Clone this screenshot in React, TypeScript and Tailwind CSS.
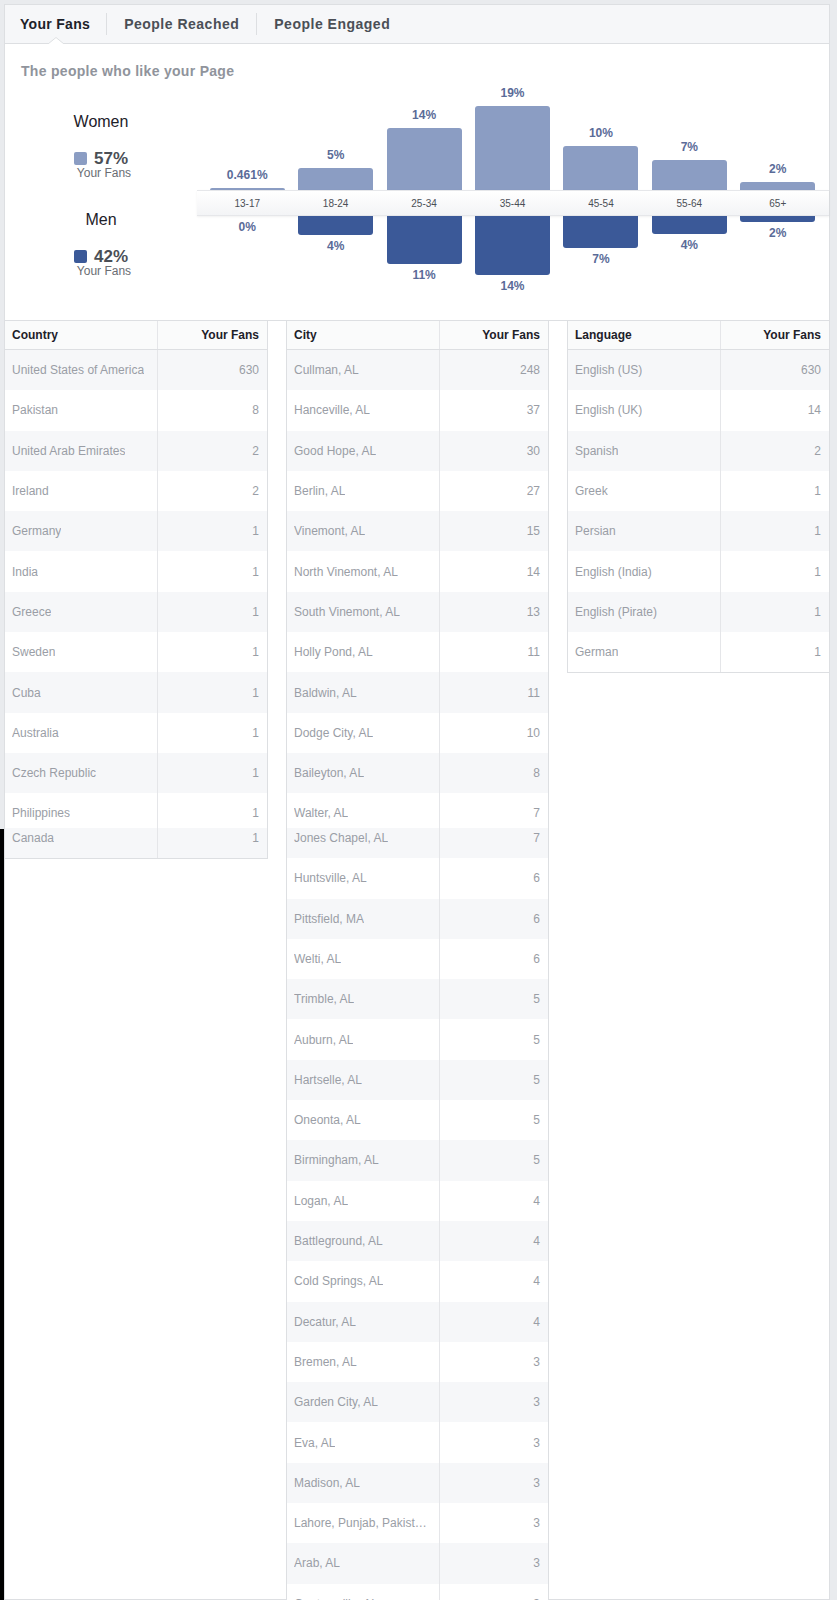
import React from 'react';

type Age = { age: string; w: string; wh: number; m: string; mh: number };

const ages: Age[] = [
  { age: '13-17', w: '0.461%', wh: 2, m: '0%', mh: 0 },
  { age: '18-24', w: '5%', wh: 22, m: '4%', mh: 19 },
  { age: '25-34', w: '14%', wh: 62, m: '11%', mh: 48 },
  { age: '35-44', w: '19%', wh: 84, m: '14%', mh: 59 },
  { age: '45-54', w: '10%', wh: 44, m: '7%', mh: 32 },
  { age: '55-64', w: '7%', wh: 30, m: '4%', mh: 18 },
  { age: '65+', w: '2%', wh: 8, m: '2%', mh: 6 },
];

const countries: [string, number][] = [
  ['United States of America', 630],
  ['Pakistan', 8],
  ['United Arab Emirates', 2],
  ['Ireland', 2],
  ['Germany', 1],
  ['India', 1],
  ['Greece', 1],
  ['Sweden', 1],
  ['Cuba', 1],
  ['Australia', 1],
  ['Czech Republic', 1],
  ['Philippines', 1],
  ['Canada', 1],
];

const cities: [string, number][] = [
  ['Cullman, AL', 248],
  ['Hanceville, AL', 37],
  ['Good Hope, AL', 30],
  ['Berlin, AL', 27],
  ['Vinemont, AL', 15],
  ['North Vinemont, AL', 14],
  ['South Vinemont, AL', 13],
  ['Holly Pond, AL', 11],
  ['Baldwin, AL', 11],
  ['Dodge City, AL', 10],
  ['Baileyton, AL', 8],
  ['Walter, AL', 7],
  ['Jones Chapel, AL', 7],
  ['Huntsville, AL', 6],
  ['Pittsfield, MA', 6],
  ['Welti, AL', 6],
  ['Trimble, AL', 5],
  ['Auburn, AL', 5],
  ['Hartselle, AL', 5],
  ['Oneonta, AL', 5],
  ['Birmingham, AL', 5],
  ['Logan, AL', 4],
  ['Battleground, AL', 4],
  ['Cold Springs, AL', 4],
  ['Decatur, AL', 4],
  ['Bremen, AL', 3],
  ['Garden City, AL', 3],
  ['Eva, AL', 3],
  ['Madison, AL', 3],
  ['Lahore, Punjab, Pakistan', 3],
  ['Arab, AL', 3],
  ['Guntersville, AL', 3],
];

const languages: [string, number][] = [
  ['English (US)', 630],
  ['English (UK)', 14],
  ['Spanish', 2],
  ['Greek', 1],
  ['Persian', 1],
  ['English (India)', 1],
  ['English (Pirate)', 1],
  ['German', 1],
];

// the long city name gets cut with an ellipsis in the original
const LONG_NAME = 'Lahore, Punjab, Pakistan';

// rows 11 and 12 are clipped where the two captures were stitched together
const rowClass = (i: number) => {
  if (i === 11) return 'h-[34.7px] pt-[5.6px]';
  if (i === 12) return 'h-[30.3px] pb-[10px]';
  return 'h-[40.3px]';
};

const Table = ({ title, rows, className }: { title: string; rows: [string, number][]; className: string }) => (
  <div className={`border-b border-[#dddfe2] ${className}`}>
    <div className="grid grid-cols-[152px_1fr] h-[29px] border-b border-[#dddfe2] bg-[#fafbfb] text-[12px] font-bold text-[#1d2129]">
      <div className="flex items-center pl-[7px]">{title}</div>
      <div className="flex items-center justify-end pr-[8px] border-l border-[#e5e6e9]">Your Fans</div>
    </div>
    {rows.map(([name, n], i) => (
      <div
        key={name}
        className={`grid grid-cols-[152px_1fr] text-[12px] text-[#9a9ea6] ${i % 2 === 0 ? 'bg-[#f6f7f9]' : 'bg-white'}`}
      >
        <div className={`flex items-center pl-[7px] pr-[6px] min-w-0 ${rowClass(i)}`}>
          <span className={`truncate ${name === LONG_NAME ? 'max-w-[133px]' : ''}`}>{name}</span>
        </div>
        <div className={`flex items-center justify-end pr-[8px] border-l border-[#e5e6e9] ${rowClass(i)}`}>{n}</div>
      </div>
    ))}
  </div>
);

const Legend = ({ label, pct, color }: { label: string; pct: string; color: string }) => (
  <div className="flex flex-col items-center">
    <div className="text-[16px] leading-[18px] text-[#1d2129]">{label}</div>
    <div className="flex items-center gap-[7px] mt-[19px] h-[17px]">
      <div className={`w-[13px] h-[13px] rounded-[2px] ${color}`} />
      <div className="text-[17px] leading-[17px] font-bold text-[#4b4f56]">{pct}</div>
    </div>
    <div className="pl-[6px] -mt-[1px] text-[12px] leading-[14px] text-[#6a6d73]">Your Fans</div>
  </div>
);

export default function App() {
  return (
    <div className="h-[1600px] overflow-hidden bg-[#e9ebee] flex pt-[4px] pr-[7px] font-['Liberation_Sans',Arial,sans-serif]">
      <div className="w-[4px] shrink-0 flex flex-col">
        <div className="h-[825px] shrink-0" />
        <div className="flex-1 bg-black" />
      </div>

      <div className="flex-1 min-w-0 bg-white border border-[#dddfe2]">
        {/* Tabs */}
        <div className="flex items-center h-[39px] bg-[#f6f7f9] border-b border-[#dddfe2] text-[14px] font-bold">
          <div className="relative h-full flex items-center pl-[15px] pr-[16px] tracking-[0.3px] text-[#1d2129]">
            Your Fans
            <svg className="absolute left-1/2 -translate-x-1/2 -bottom-[1px]" width="16" height="7" viewBox="0 0 16 7">
              <path d="M0 7 L8 0.5 L16 7 Z" fill="#fff" />
              <path d="M0 7 L8 0.5 L16 7" fill="none" stroke="#dddfe2" strokeWidth="1" />
            </svg>
          </div>
          <div className="w-px h-[22px] bg-[#dddfe2]" />
          <div className="h-full flex items-center px-[17px] tracking-[0.5px] text-[#4b4f56]">People Reached</div>
          <div className="w-px h-[22px] bg-[#dddfe2]" />
          <div className="h-full flex items-center px-[17px] tracking-[0.5px] text-[#4b4f56]">People Engaged</div>
        </div>

        {/* Age & gender chart */}
        <div className="pt-[20px]">
          <div className="pl-[16px] text-[14px] leading-[14px] font-bold tracking-[0.3px] text-[#90949c]">
            The people who like your Page
          </div>
          <div className="flex">
            <div className="w-[192px] shrink-0 flex flex-col items-center pt-[35px]">
              <Legend label="Women" pct="57%" color="bg-[#8b9dc3]" />
              <div className="mt-[31px]">
                <Legend label="Men" pct="42%" color="bg-[#3b5998]" />
              </div>
            </div>
            <div className="flex-1 flex flex-col">
              <div className="h-[112px] grid grid-cols-7 pl-[6px] pr-[7px]">
                {ages.map((a) => (
                  <div key={a.age} className="flex flex-col items-center justify-end">
                    <div className="text-[12px] leading-[14px] font-bold text-[#5a6b98] mb-[6px]">{a.w}</div>
                    <div className="w-[75px] rounded-t-[3px] bg-[#8b9dc3]" style={{ height: a.wh }} />
                  </div>
                ))}
              </div>
              <div className="h-[26px] grid grid-cols-7 pl-[6px] pr-[7px] bg-linear-to-b from-white to-[#f3f4f6] border-y border-[#e6e7ea] shadow-[0_1px_2px_rgba(0,0,0,0.06)] text-[10px] text-[#4b4f56]">
                {ages.map((a) => (
                  <div key={a.age} className="flex items-center justify-center">
                    {a.age}
                  </div>
                ))}
              </div>
              <div className="h-[104px] grid grid-cols-7 pl-[6px] pr-[7px]">
                {ages.map((a) => (
                  <div key={a.age} className="flex flex-col items-center">
                    {a.mh > 0 && <div className="w-[75px] rounded-b-[3px] bg-[#3b5998]" style={{ height: a.mh }} />}
                    <div className="text-[12px] leading-[14px] font-bold text-[#5a6b98] mt-[4px]">{a.m}</div>
                  </div>
                ))}
              </div>
            </div>
          </div>
        </div>

        {/* Breakdown tables */}
        <div className="flex items-start gap-[18px] border-t border-[#dddfe2]">
          <Table title="Country" rows={countries} className="w-[263px] border-r" />
          <Table title="City" rows={cities} className="w-[263px] border-x" />
          <Table title="Language" rows={languages} className="flex-1 border-l" />
        </div>
      </div>
    </div>
  );
}
